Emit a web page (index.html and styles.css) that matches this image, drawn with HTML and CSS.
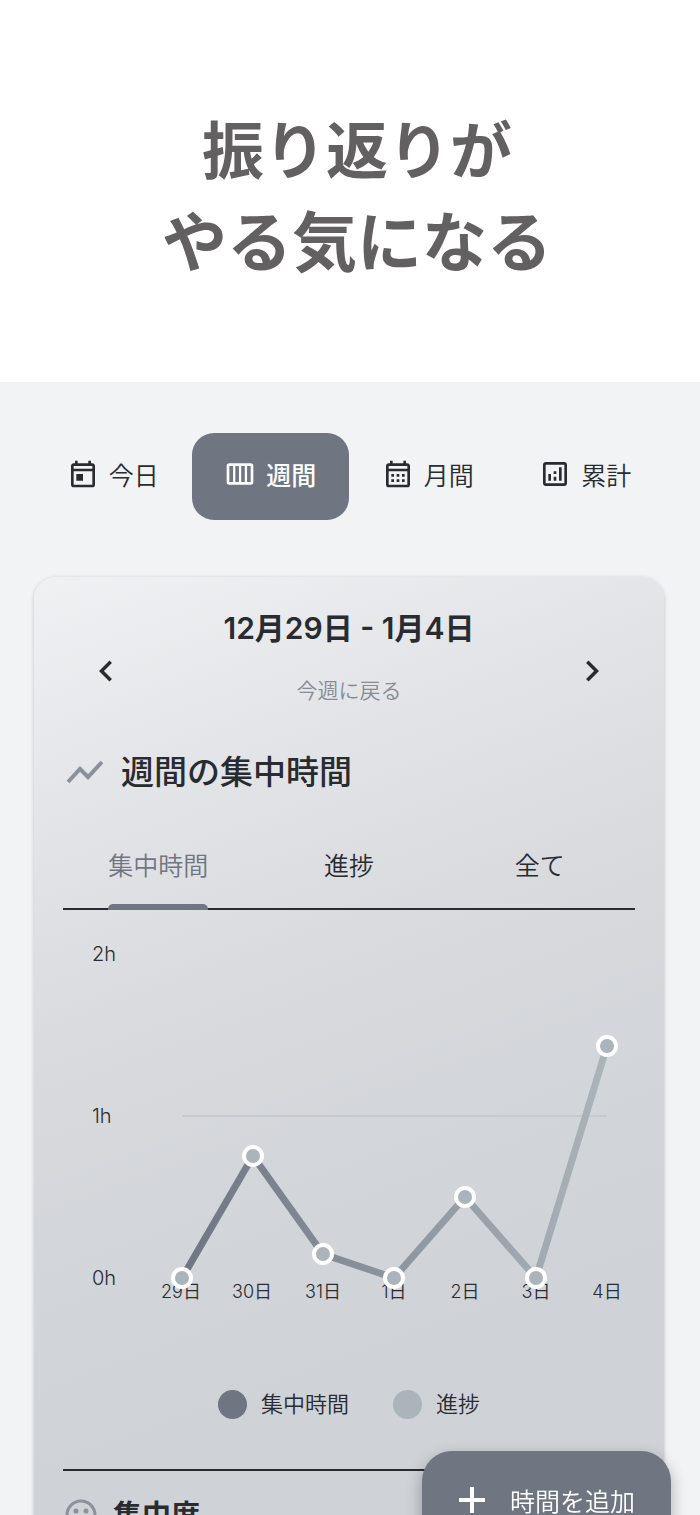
FILE: index.html
```html
<!DOCTYPE html>
<html lang="ja">
<head>
    <meta charset="UTF-8">
    <meta name="viewport" content="width=device-width, initial-scale=1.0">
    <title>週間の集中時間</title>
    <link rel="stylesheet" href="styles.css">
</head>
<body>
    <header class="hero">
        <h1><span class="hero-top">振り返りが</span><span class="hero-bottom">やる気になる</span></h1>
    </header>

    <main class="app">
        <nav class="periods">
            <button class="period">
                <svg class="icon" viewBox="0 0 24 24"><path d="M19 4h-1V2h-2v2H8V2H6v2H5c-1.1 0-2 .9-2 2v14c0 1.1.9 2 2 2h14c1.1 0 2-.9 2-2V6c0-1.100-.9-2-2-2zm0 16H5V10h14v10zm0-12H5V6h14v2zM7 12h5v5H7z"/></svg>
                今日
            </button>
            <button class="period active">
                <svg class="icon" viewBox="0 0 24 24"><path fill-rule="evenodd" d="M4 4h16a2 2 0 0 1 2 2v12a2 2 0 0 1-2 2H4a2 2 0 0 1-2-2V6a2 2 0 0 1 2-2zM4 6v12h2.800V6zM8.500 6v12h2.700V6zM12.900 6v12h2.700V6zM17.300 6v12H20V6z"/></svg>
                週間
            </button>
            <button class="period">
                <svg class="icon" viewBox="0 0 24 24"><path d="M19 4h-1V2h-2v2H8V2H6v2H5c-1.100 0-2 .9-2 2v14c0 1.100.9 2 2 2h14c1.100 0 2-.9 2-2V6c0-1.100-.9-2-2-2zm0 16H5V10h14v10zm0-12H5V6h14v2zM7 12h2v2H7zM11 12h2v2h-2zM15 12h2v2h-2zM7 16h2v2H7zM11 16h2v2h-2zM15 16h2v2h-2z"/></svg>
                月間
            </button>
            <button class="period">
                <svg class="icon" viewBox="0 0 24 24"><path d="M19 3H5c-1.100 0-2 .9-2 2v14c0 1.100.9 2 2 2h14c1.100 0 2-.9 2-2V5c0-1.100-.9-2-2-2zm0 16H5V5h14v14zM7 12h2v5H7zM15 7h2v10h-2zM11 14h2v3h-2zM11 10h2v2h-2z"/></svg>
                累計
            </button>
        </nav>

        <section class="card">
            <div class="week">
                <button class="arrow" aria-label="前の週"><svg class="chevron" viewBox="0 0 24 24"><path d="M15.410 7.410L14 6l-6 6 6 6 1.410-1.410L10.830 12z"/></svg></button>
                <div class="week-text">
                    <h2>12月29日 - 1月4日</h2>
                    <a href="#" class="back">今週に戻る</a>
                </div>
                <button class="arrow" aria-label="次の週"><svg class="chevron" viewBox="0 0 24 24"><path d="M8.590 16.590L10 18l6-6-6-6-1.410 1.410L13.170 12z"/></svg></button>
            </div>

            <div class="section-title">
                <svg class="trend" viewBox="0 0 36 24"><path d="M1 22L13 9l8 8L35 2"/></svg>
                <h3>週間の集中時間</h3>
            </div>

            <div class="tabs">
                <button class="tab selected">集中時間</button>
                <button class="tab">進捗</button>
                <button class="tab">全て</button>
            </div>

            <svg class="chart" viewBox="0 0 572 440">
                <defs>
                    <linearGradient id="line" gradientUnits="userSpaceOnUse" x1="119" y1="0" x2="544" y2="0">
                        <stop offset="0" stop-color="#6f7682"/>
                        <stop offset="1" stop-color="#abb3bb"/>
                    </linearGradient>
                </defs>
                <g class="y-labels">
                    <text x="29" y="51">2h</text>
                    <text x="29" y="213">1h</text>
                    <text x="29" y="375">0h</text>
                </g>
                <g class="x-labels">
                    <text x="118" y="388">29日</text>
                    <text x="189" y="388">30日</text>
                    <text x="260" y="388">31日</text>
                    <text x="331" y="388">1日</text>
                    <text x="402" y="388">2日</text>
                    <text x="473" y="388">3日</text>
                    <text x="544" y="388">4日</text>
                </g>
                <path class="grid" d="M119 206H544"/>
                <polyline class="line" points="119,368 190,246 260,344 331,368 402,287 473,368 544,136"/>
                <g class="dots">
                    <circle cx="119" cy="368" r="9"/>
                    <circle cx="190" cy="246" r="9"/>
                    <circle cx="260" cy="344" r="9"/>
                    <circle cx="331" cy="368" r="9"/>
                    <circle cx="402" cy="287" r="9"/>
                    <circle cx="473" cy="368" r="9"/>
                    <circle cx="544" cy="136" r="9"/>
                </g>
            </svg>

            <ul class="legend">
                <li><span class="swatch dark"></span>集中時間</li>
                <li><span class="swatch light"></span>進捗</li>
            </ul>

            <div class="section-title focus">
                <svg class="face" viewBox="0 0 32 32"><circle class="ring" cx="16" cy="16" r="14"/><circle cx="11" cy="12" r="2.500"/><circle cx="21" cy="12" r="2.500"/><path class="ring" d="M9 20q7 6 14 0"/></svg>
                <h3>集中度</h3>
            </div>
        </section>
    </main>

    <button class="add">
        <svg class="plus" viewBox="0 0 26 26"><path d="M13 0v26M0 13h26"/></svg>
        時間を追加
    </button>
</body>
</html>
```
FILE: styles.css
```css
* {
    box-sizing: border-box;
}

body {
    margin: 0;
    height: 100vh;
    overflow: hidden;
    display: flex;
    flex-direction: column;
    background-color: #f1f3f5;
    color: #282b2f;
    font-family: Inter, "Noto Sans CJK JP", sans-serif;
    font-weight: 350;
}

h1, h2, h3 {
    margin: 0;
}

button {
    border: none;
    padding: 0;
    background: none;
    color: inherit;
    font: inherit;
    cursor: pointer;
}

svg {
    display: block;
    fill: currentColor;
}

/* headline */
.hero {
    flex: none;
    height: 382px;
    padding: 102px 0 0 14px;
    background-color: #fff;
    text-align: center;
}

.hero h1 {
    color: #626061;
    font-family: "Noto Sans CJK JP", sans-serif;
    font-weight: 700;
    line-height: 91px;
}

.hero span {
    display: block;
}

.hero-top {
    font-size: 62px;
}

.hero-bottom {
    font-size: 65px;
}

.app {
    flex: 1;
    min-height: 0;
    padding: 51px 36px 0 34px;
}

/* period switch */
.periods {
    display: grid;
    grid-template-columns: repeat(4, 1fr);
    margin-bottom: 57px;
}

.period {
    display: flex;
    align-items: center;
    justify-content: center;
    gap: 10px;
    height: 87px;
    padding-bottom: 6px;
    border-radius: 22px;
    font-size: 25px;
}

.period.active {
    background-color: #6f7682;
    color: #fff;
    font-weight: 500;
}

.icon {
    width: 32px;
    height: 32px;
}

/* card */
.card {
    min-height: 1000px;
    padding: 30px 29px;
    border-radius: 22px;
    background: linear-gradient(160deg, #f0f1f3 0, #e4e5e8 220px, #dadbdf 440px, #d3d6da 620px, #cfd2d7 850px);
    box-shadow: 0 1px 4px rgba(0, 0, 0, 0.2);
}

.week {
    display: flex;
    align-items: center;
    justify-content: space-between;
    padding: 0 22px;
}

.arrow {
    padding-top: 27px;
}

.chevron {
    width: 42px;
    height: 42px;
}

.week-text {
    text-align: center;
}

.week-text h2 {
    font-size: 30px;
    font-weight: 600;
    line-height: 42px;
}

.back {
    display: block;
    margin-top: 26px;
    color: #858c96;
    font-size: 21px;
    line-height: 32px;
    text-decoration: none;
}

.section-title {
    display: flex;
    align-items: center;
    gap: 18px;
    margin-top: 41px;
    padding-left: 4px;
}

.section-title h3 {
    font-size: 33px;
    font-weight: 500;
    line-height: 48px;
}

.trend {
    width: 36px;
    height: 24px;
    fill: none;
    stroke: #8a919b;
    stroke-width: 4;
}

.tabs {
    display: grid;
    grid-template-columns: repeat(3, 1fr);
    justify-items: center;
    margin-top: 24px;
    border-bottom: 2px solid #282b2f;
}

.tab {
    height: 88px;
    font-size: 25px;
}

.tab.selected {
    position: relative;
    color: #6f7682;
}

.tab.selected::after {
    content: "";
    position: absolute;
    left: 0;
    right: 0;
    bottom: -2px;
    height: 6px;
    border-radius: 5px 5px 0 0;
    background-color: #6f7682;
}

/* chart */
.chart {
    width: 100%;
}

.y-labels {
    font-size: 20px;
}

.x-labels {
    font-size: 18px;
    text-anchor: middle;
}

.grid {
    stroke: #c6c9cd;
    stroke-width: 2;
}

.line {
    fill: none;
    stroke: url(#line);
    stroke-width: 7;
}

.dots {
    fill: #abb3bb;
    stroke: #fff;
    stroke-width: 4;
}

.legend {
    display: flex;
    justify-content: center;
    gap: 44px;
    margin: 0;
    padding: 38px 0 49px;
    border-bottom: 2px solid #282b2f;
    list-style: none;
    font-size: 22px;
    line-height: 32px;
}

.legend li {
    display: flex;
    align-items: center;
    gap: 14px;
}

.swatch {
    width: 29px;
    height: 29px;
    border-radius: 50%;
}

.dark {
    background-color: #6f7682;
}

.light {
    background-color: #abb3bb;
}

.section-title.focus {
    gap: 16px;
    margin-top: 18px;
    padding-left: 2px;
}

.focus h3 {
    padding-top: 3px;
    font-size: 29px;
    font-weight: 700;
}

.face {
    width: 32px;
    height: 32px;
    color: #8a919b;
}

.ring {
    fill: none;
    stroke: currentColor;
    stroke-width: 3;
}

/* floating button */
.add {
    position: fixed;
    right: 29px;
    bottom: -36px;
    display: flex;
    align-items: center;
    gap: 25px;
    height: 100px;
    padding: 0 36px 2px 37px;
    border-radius: 30px;
    background-color: #6f7682;
    box-shadow: 0 6px 16px rgba(0, 0, 0, 0.3);
    color: #fff;
    font-size: 25px;
}

.plus {
    width: 26px;
    height: 26px;
    stroke: currentColor;
    stroke-width: 4;
}
```
